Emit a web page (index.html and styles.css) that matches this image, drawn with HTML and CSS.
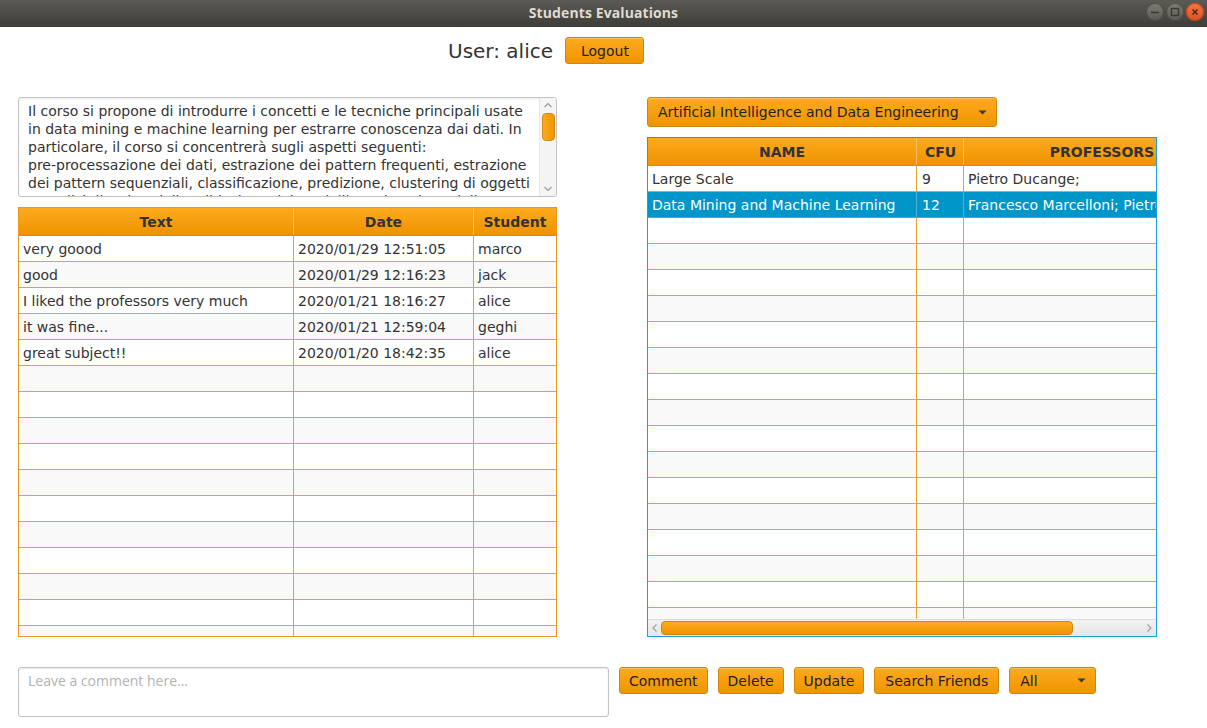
FILE: index.html
```html
<!DOCTYPE html>
<html>
<head>
<meta charset="utf-8">
<title>Students Evaluations</title>
<link rel="stylesheet" href="styles.css">
</head>
<body>
<div class="titlebar">
  <span class="title">Students Evaluations</span>
  <div class="wbtns">
    <span class="wb min"><svg width="10" height="10" viewBox="0 0 10 10"><path d="M1 5.5h8" stroke="#3b3a36" stroke-width="1.6"/></svg></span>
    <span class="wb max"><svg width="10" height="10" viewBox="0 0 10 10"><rect x="1.5" y="1.5" width="7" height="7" fill="none" stroke="#3b3a36" stroke-width="1.4"/></svg></span>
    <span class="wb close"><svg width="10" height="10" viewBox="0 0 10 10"><path d="M2.5 2.5l5 5M7.5 2.5l-5 5" stroke="#4a2a1a" stroke-width="1.5"/></svg></span>
  </div>
</div>

<div class="content">
  <div class="userbar">
    <span class="user">User: alice</span>
    <button class="btn logout">Logout</button>
  </div>

  <div class="main">
    <div class="leftcol">
      <div class="textarea">
        <div class="ta-text">
          <div>Il corso si propone di introdurre i concetti e le tecniche principali usate</div>
          <div>in data mining e machine learning per estrarre conoscenza dai dati. In</div>
          <div>particolare, il corso si concentrerà sugli aspetti seguenti:</div>
          <div>pre-processazione dei dati, estrazione dei pattern frequenti, estrazione</div>
          <div>dei pattern sequenziali, classificazione, predizione, clustering di oggetti</div>
          <div>e analisi di reti sociali, validazione dei modelli e valutazione delle</div>
        </div>
        <div class="vscroll">
          <svg class="arr" width="10" height="8" viewBox="0 0 10 8"><path d="M1.5 6L5 2.5 8.5 6" fill="none" stroke="#9a9a9a" stroke-width="1.1"/></svg>
          <div class="vtrack"><div class="vthumb"></div></div>
          <svg class="arr" width="10" height="8" viewBox="0 0 10 8"><path d="M1.5 2L5 5.5 8.5 2" fill="none" stroke="#9a9a9a" stroke-width="1.1"/></svg>
        </div>
      </div>

      <div class="table ltable">
        <div class="thead">
          <div class="c lc1">Text</div><div class="c lc2">Date</div><div class="c lc3">Student</div>
        </div>
        <div class="tbody">
          <div class="tr"><div class="c lc1">very goood</div><div class="c lc2">2020/01/29 12:51:05</div><div class="c lc3">marco</div></div>
          <div class="tr"><div class="c lc1">good</div><div class="c lc2">2020/01/29 12:16:23</div><div class="c lc3">jack</div></div>
          <div class="tr"><div class="c lc1">I liked the professors very much</div><div class="c lc2">2020/01/21 18:16:27</div><div class="c lc3">alice</div></div>
          <div class="tr"><div class="c lc1">it was fine...</div><div class="c lc2">2020/01/21 12:59:04</div><div class="c lc3">geghi</div></div>
          <div class="tr"><div class="c lc1">great subject!!</div><div class="c lc2">2020/01/20 18:42:35</div><div class="c lc3">alice</div></div>
          <div class="tr"><div class="c lc1"></div><div class="c lc2"></div><div class="c lc3"></div></div>
          <div class="tr"><div class="c lc1"></div><div class="c lc2"></div><div class="c lc3"></div></div>
          <div class="tr"><div class="c lc1"></div><div class="c lc2"></div><div class="c lc3"></div></div>
          <div class="tr"><div class="c lc1"></div><div class="c lc2"></div><div class="c lc3"></div></div>
          <div class="tr"><div class="c lc1"></div><div class="c lc2"></div><div class="c lc3"></div></div>
          <div class="tr"><div class="c lc1"></div><div class="c lc2"></div><div class="c lc3"></div></div>
          <div class="tr"><div class="c lc1"></div><div class="c lc2"></div><div class="c lc3"></div></div>
          <div class="tr"><div class="c lc1"></div><div class="c lc2"></div><div class="c lc3"></div></div>
          <div class="tr"><div class="c lc1"></div><div class="c lc2"></div><div class="c lc3"></div></div>
          <div class="tr"><div class="c lc1"></div><div class="c lc2"></div><div class="c lc3"></div></div>
          <div class="tr"><div class="c lc1"></div><div class="c lc2"></div><div class="c lc3"></div></div>
        </div>
      </div>
    </div>

    <div class="rightcol">
      <div class="combo course">
        <span class="combo-text">Artificial Intelligence and Data Engineering</span>
        <svg class="caret" width="9" height="5" viewBox="0 0 9 5"><path d="M0.5 0.5h8L4.5 4.5z" fill="#3a3a3a"/></svg>
      </div>

      <div class="table rtable">
        <div class="rclip">
          <div class="rinner">
            <div class="thead">
              <div class="c rc1">NAME</div><div class="c rc2">CFU</div><div class="c rc3">PROFESSORS</div>
            </div>
            <div class="tbody">
              <div class="tr"><div class="c rc1">Large Scale</div><div class="c rc2">9</div><div class="c rc3">Pietro Ducange;</div></div>
              <div class="tr sel"><div class="c rc1">Data Mining and Machine Learning</div><div class="c rc2">12</div><div class="c rc3">Francesco Marcelloni; Pietro Ducange;</div></div>
              <div class="tr"><div class="c rc1"></div><div class="c rc2"></div><div class="c rc3"></div></div>
              <div class="tr"><div class="c rc1"></div><div class="c rc2"></div><div class="c rc3"></div></div>
              <div class="tr"><div class="c rc1"></div><div class="c rc2"></div><div class="c rc3"></div></div>
              <div class="tr"><div class="c rc1"></div><div class="c rc2"></div><div class="c rc3"></div></div>
              <div class="tr"><div class="c rc1"></div><div class="c rc2"></div><div class="c rc3"></div></div>
              <div class="tr"><div class="c rc1"></div><div class="c rc2"></div><div class="c rc3"></div></div>
              <div class="tr"><div class="c rc1"></div><div class="c rc2"></div><div class="c rc3"></div></div>
              <div class="tr"><div class="c rc1"></div><div class="c rc2"></div><div class="c rc3"></div></div>
              <div class="tr"><div class="c rc1"></div><div class="c rc2"></div><div class="c rc3"></div></div>
              <div class="tr"><div class="c rc1"></div><div class="c rc2"></div><div class="c rc3"></div></div>
              <div class="tr"><div class="c rc1"></div><div class="c rc2"></div><div class="c rc3"></div></div>
              <div class="tr"><div class="c rc1"></div><div class="c rc2"></div><div class="c rc3"></div></div>
              <div class="tr"><div class="c rc1"></div><div class="c rc2"></div><div class="c rc3"></div></div>
              <div class="tr"><div class="c rc1"></div><div class="c rc2"></div><div class="c rc3"></div></div>
              <div class="tr"><div class="c rc1"></div><div class="c rc2"></div><div class="c rc3"></div></div>
              <div class="tr"><div class="c rc1"></div><div class="c rc2"></div><div class="c rc3"></div></div>
            </div>
          </div>
        </div>
        <div class="hscroll">
          <svg class="arr" width="8" height="10" viewBox="0 0 8 10"><path d="M5.5 1.5L2 5l3.5 3.5" fill="none" stroke="#9a9a9a" stroke-width="1.1"/></svg>
          <div class="htrack"><div class="hthumb"></div></div>
          <svg class="arr" width="8" height="10" viewBox="0 0 8 10"><path d="M2.5 1.5L6 5 2.5 8.5" fill="none" stroke="#9a9a9a" stroke-width="1.1"/></svg>
        </div>
      </div>
    </div>
  </div>

  <div class="bottombar">
    <div class="comment-box"><span class="placeholder">Leave a comment here...</span></div>
    <button class="btn">Comment</button>
    <button class="btn">Delete</button>
    <button class="btn">Update</button>
    <button class="btn search">Search Friends</button>
    <div class="combo filter">
      <span class="combo-text">All</span>
      <svg class="caret" width="9" height="5" viewBox="0 0 9 5"><path d="M0.5 0.5h8L4.5 4.5z" fill="#3a3a3a"/></svg>
    </div>
  </div>
</div>
</body>
</html>
```

FILE: styles.css
```css
* { box-sizing: border-box; }
html, body { margin: 0; padding: 0; }
body {
  width: 1207px;
  height: 728px;
  overflow: hidden;
  background: #ffffff;
  font-family: "DejaVu Sans", sans-serif;
  font-size: 14px;
  color: #333333;
}

/* ---------- title bar ---------- */
.titlebar {
  height: 27px;
  background: linear-gradient(#5c5a54, #3d3c38);
  display: grid;
  grid-template-columns: 1fr auto 1fr;
  align-items: center;
}
.title {
  grid-column: 2;
  color: #dfdbd2;
  font-family: "Open Sans", "DejaVu Sans", sans-serif;
  font-weight: 700;
  font-size: 14px;
  letter-spacing: 0.1px;
  margin-top: -2px;
}
.wbtns {
  grid-column: 3;
  justify-self: end;
  display: flex;
  gap: 2px;
  padding-right: 3px;
  margin-top: -3px;
}
.wb {
  width: 18px;
  height: 18px;
  border-radius: 50%;
  display: flex;
  align-items: center;
  justify-content: center;
}
.wb.min, .wb.max {
  background: linear-gradient(#7d7c75, #5a5953);
  box-shadow: inset 0 0 0 1px #4a4944;
}
.wb.close {
  background: linear-gradient(#f3784a, #df4f1e);
  box-shadow: inset 0 0 0 1px #c04418;
}

/* ---------- content ---------- */
.content {
  padding: 10px 0 0 18px;
}
.userbar {
  display: flex;
  align-items: center;
  gap: 12px;
  height: 27px;
  padding-left: 430px;
}
.user {
  font-size: 20px;
  color: #333333;
}

.btn {
  height: 27px;
  padding: 0 9px;
  font-family: "DejaVu Sans", sans-serif;
  font-size: 14px;
  color: #222222;
  background: linear-gradient(#fcaa1f, #f09400);
  border: 1px solid #cf860c;
  border-radius: 3px;
  box-shadow: inset 0 1px 0 rgba(255, 255, 255, 0.25);
}
.btn.logout {
  padding: 0 15px;
  width: 79px;
}
.btn.search {
  padding: 0 10px;
}

.main {
  display: flex;
  gap: 90px;
  margin-top: 33px;
}
.leftcol {
  width: 539px;
  display: flex;
  flex-direction: column;
  gap: 10px;
}
.rightcol {
  width: 510px;
  display: flex;
  flex-direction: column;
  gap: 10px;
}

/* ---------- description text area ---------- */
.textarea {
  height: 100px;
  border: 1px solid #c2c2c2;
  border-radius: 3px;
  display: flex;
  overflow: hidden;
  box-shadow: inset 0 1px 2px rgba(0, 0, 0, 0.08);
}
.ta-text {
  flex: 1;
  padding: 4px 0 0 9px;
  line-height: 18px;
  white-space: nowrap;
  overflow: hidden;
  color: #333333;
}
.vscroll {
  width: 17px;
  display: flex;
  flex-direction: column;
  align-items: center;
  background: #f4f4f4;
  border-left: 1px solid #e6e6e6;
  padding: 3px 0;
}
.vscroll .arr { flex: none; }
.vtrack {
  flex: 1;
  width: 100%;
  padding: 4px 1px 0 2px;
}
.vthumb {
  height: 28px;
  width: 13px;
  background: linear-gradient(90deg, #fcab22, #f09500);
  border: 1px solid #d08a12;
  border-radius: 4px;
}

/* ---------- tables ---------- */
.table {
  display: flex;
  flex-direction: column;
  overflow: hidden;
}
.ltable {
  height: 430px;
  border: 1px solid #e8981c;
}
.thead {
  display: flex;
  height: 28px;
  background: linear-gradient(#fdaa1e, #ee9300);
  border-bottom: 1px solid #e08a06;
  font-weight: 700;
  color: #333333;
}
.thead .c {
  justify-content: center;
  border-right: 1px solid #fbc15f;
}
.thead .c:last-child { border-right: none; }
.tbody {
  flex: 1;
  overflow: hidden;
}
.tr {
  display: flex;
  height: 26px;
  border-bottom: 1px solid #f0a024;
  background: #ffffff;
}
.tr:nth-child(even) { background: #f9f9f9; }
.c {
  display: flex;
  align-items: center;
  padding: 0 4px;
  white-space: nowrap;
  overflow: hidden;
  border-right: 1px solid #f0a024;
  flex: none;
}
.c:last-child { border-right: none; }
.lc1 { width: 275px; }
.lc2 { width: 180px; }
.lc3 { width: 82px; }

.rtable {
  height: 500px;
  border: 1px solid #1a9fd6;
}
.rclip {
  flex: 1;
  overflow: hidden;
}
.rinner {
  width: 592px;
  height: 100%;
  display: flex;
  flex-direction: column;
}
.rc1 { width: 269px; }
.rc2 { width: 47px; padding-left: 5px; }
.rc3 { width: 276px; border-right: none; }
.tr.sel {
  background: #0096c9;
  color: #ffffff;
  border-bottom-color: #3aaed8;
}
.tr.sel .c { border-right-color: #45b2da; }

.hscroll {
  height: 17px;
  flex: none;
  display: flex;
  align-items: center;
  background: linear-gradient(#f2f2f2, #e6e6e6);
  border-top: 1px solid #dcdcdc;
  padding: 0 3px;
}
.hscroll .arr { flex: none; }
.htrack {
  flex: 1;
  padding: 0 4px 0 2px;
}
.hthumb {
  width: 412px;
  height: 14px;
  background: linear-gradient(#fdac24, #ee9300);
  border: 1px solid #cf870f;
  border-radius: 4px;
}

/* ---------- combo boxes ---------- */
.combo {
  display: flex;
  align-items: center;
  justify-content: space-between;
  background: linear-gradient(#fcaa1f, #f09400);
  border: 1px solid #cf860c;
  border-radius: 3px;
  color: #222222;
  box-shadow: inset 0 1px 0 rgba(255, 255, 255, 0.25);
}
.combo.course {
  width: 350px;
  height: 30px;
  padding: 0 9px 0 10px;
}
.combo.filter {
  width: 87px;
  height: 27px;
  padding: 0 9px 0 10px;
}

/* ---------- bottom bar ---------- */
.bottombar {
  display: flex;
  align-items: flex-start;
  gap: 10px;
  margin-top: 30px;
}
.comment-box {
  width: 591px;
  height: 50px;
  border: 1px solid #c2c2c2;
  border-radius: 3px;
  padding: 3px 9px;
  box-shadow: inset 0 1px 2px rgba(0, 0, 0, 0.1);
}
.placeholder {
  font-family: "Open Sans", sans-serif;
  font-size: 14px;
  color: #b3b3b3;
}
```
